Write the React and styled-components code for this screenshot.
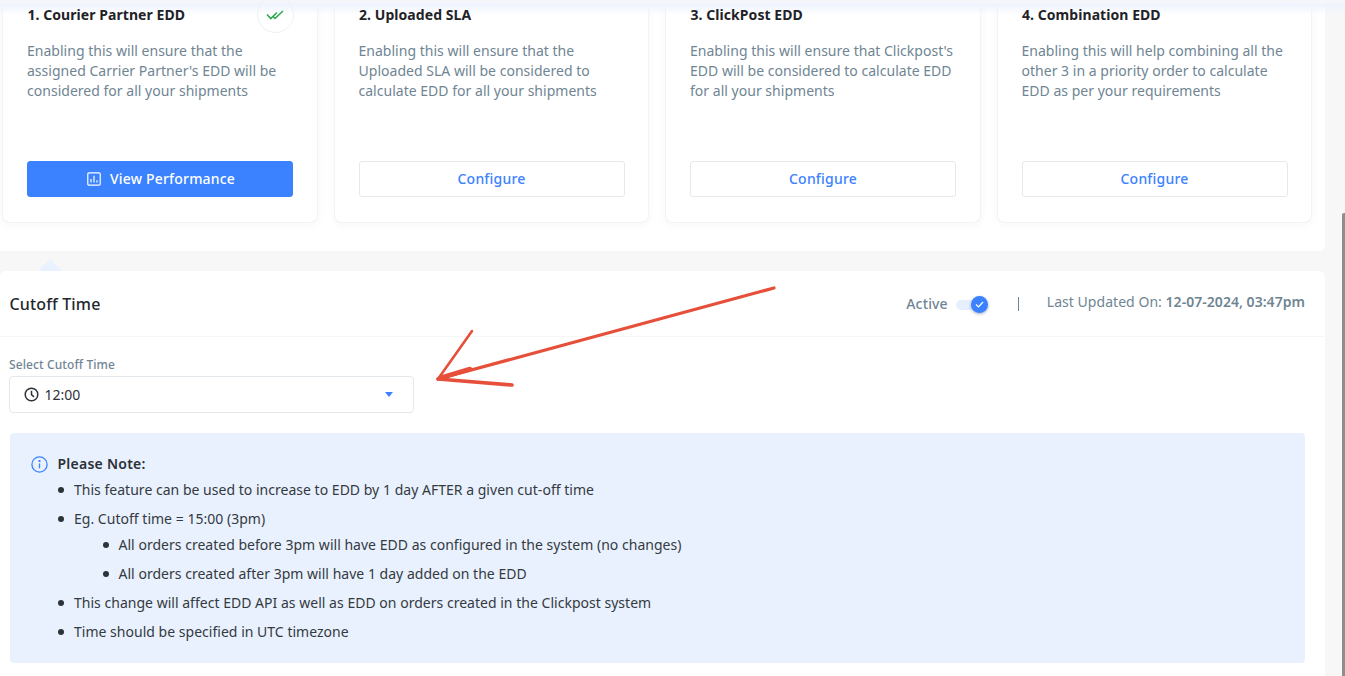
import React from 'react';
import styled, { createGlobalStyle } from 'styled-components';

const Global = createGlobalStyle`
  html, body { margin: 0; padding: 0; overflow: hidden; background: #f7f7f7; }
  * { box-sizing: border-box; }
  body { font-family: "Noto Sans", "Open Sans", sans-serif; }
`;

const Page = styled.div`
  position: relative;
  width: 1345px;
  height: 676px;
  overflow: hidden;
  background: #f7f7f7;
`;
const TopShade = styled.div`
  position: absolute;
  left: 0; right: 0; top: 0;
  height: 15px;
  background: linear-gradient(180deg, #f4f6f9 0, #f4f6f9 3px, #eef3fe 4px, rgba(240,245,255,0) 15px);
  z-index: 1;
`;
const Content = styled.div`
  width: 1325px;
  display: flex;
  flex-direction: column;
  gap: 20px;
`;
const CardsPanel = styled.section`
  height: 251px;
  background: #fff;
  border-radius: 0 0 6px 0;
  padding-left: 2px;
  display: grid;
  grid-template-columns: repeat(4, 315.5px);
  column-gap: 16px;
  align-items: start;
`;
const Card = styled.article`
  position: relative;
  height: 223px;
  background: #fff;
  border: 1px solid #f2f3f5;
  border-top: 0;
  border-radius: 0 0 8px 8px;
  box-shadow: 0 2px 8px rgba(40, 60, 90, 0.04);
  padding: 5px 24px 0;
  display: flex;
  flex-direction: column;
`;
const CardTitle = styled.h3`
  position: relative;
  z-index: 2;
  margin: 0 0 0 0.5px;
  font-size: 14px;
  line-height: 19px;
  font-weight: 700;
  letter-spacing: 0.06px;
  color: #1f2328;
`;
const CardText = styled.p`
  margin: 17px 0 0;
  width: 266px;
  font-size: 14px;
  line-height: 20px;
  letter-spacing: 0.02px;
  color: #6f8593;
`;
const Badge = styled.div`
  position: absolute;
  z-index: 2;
  right: 23px;
  top: -4px;
  width: 37px;
  height: 37px;
  border-radius: 50%;
  background: transparent;
  border: 1px solid #eef0f2;
  display: flex;
  align-items: center;
  justify-content: center;
`;
const ActionButton = styled.button`
  position: absolute;
  left: 24px;
  top: 161px;
  width: 266px;
  height: 36px;
  border-radius: 3px;
  border: 1px solid ${p => (p.$primary ? '#3a82ff' : '#e6e9ec')};
  background: ${p => (p.$primary ? '#3a82ff' : '#fff')};
  color: ${p => (p.$primary ? '#fff' : '#3a82ff')};
  font: 500 14px/20px "Noto Sans", sans-serif;
  letter-spacing: 0.2px;
  display: flex;
  align-items: center;
  justify-content: center;
  gap: 9px;
  padding: 0 1px 0 ${p => (p.$primary ? '3px' : '1px')};
`;
const CutoffPanel = styled.section`
  position: relative;
  height: 420px;
  background: #fff;
  border-radius: 6px 6px 0 0;
`;
const Peak = styled.div`
  position: absolute;
  left: 38px;
  top: -12px;
  width: 0;
  height: 0;
  border-left: 12px solid transparent;
  border-right: 12px solid transparent;
  border-bottom: 12px solid #eaf2ff;
`;
const PanelHeader = styled.header`
  height: 66px;
  border-bottom: 1px solid #f6f6f7;
  padding: 0 20px 0 9.5px;
  display: flex;
  align-items: center;
  justify-content: space-between;
`;
const PanelTitle = styled.h2`
  margin: 0;
  font-size: 16px;
  font-weight: 500;
  line-height: 22px;
  letter-spacing: 0.15px;
  color: #24282d;
`;
const Status = styled.div`
  display: flex;
  align-items: center;
  font-size: 14px;
  line-height: 20px;
  color: #6f8593;
`;
const ActiveLabel = styled.span`
  margin-top: 0;
  font-weight: 500;
  letter-spacing: 0.15px;
`;
const SwitchTrack = styled.div`
  position: relative;
  width: 32px;
  height: 10px;
  margin: 2px 0 0 8px;
  border-radius: 5px;
  background: #e6effe;
`;
const SwitchKnob = styled.div`
  position: absolute;
  right: 0;
  top: -4px;
  width: 17px;
  height: 17px;
  border-radius: 50%;
  background: #3a82ff;
  box-shadow: 0 1px 3px rgba(30, 60, 120, 0.45);
  display: flex;
  align-items: center;
  justify-content: center;
`;
const Divider = styled.span`
  width: 1px;
  height: 14px;
  margin: 0 28px 0 30px;
  background: #6f8593;
`;
const Updated = styled.span`
  margin-top: -4px;
  letter-spacing: 0.04px;
  b { font-weight: 600; }
`;
const PanelBody = styled.div`
  padding: 20px 20px 0 9px;
`;
const FieldLabel = styled.label`
  display: block;
  font-size: 12px;
  line-height: 16px;
  font-weight: 500;
  letter-spacing: 0.1px;
  color: #6f8593;
`;
const Select = styled.div`
  margin-top: 3px;
  width: 405px;
  height: 37px;
  border: 1px solid #e3e8ed;
  border-radius: 4px;
  padding: 0 20px 0 13.5px;
  display: flex;
  align-items: center;
  gap: 6px;
  font-size: 14px;
  color: #2c3238;
`;
const Caret = styled.span`
  margin-left: auto;
  width: 0;
  height: 0;
  border-left: 4.5px solid transparent;
  border-right: 4.5px solid transparent;
  border-top: 5px solid #3a82ff;
`;
const Note = styled.div`
  margin: 20px 0 0 1px;
  width: 1295px;
  height: 230px;
  border-radius: 4px;
  background: #e9f1ff;
  padding: 21px 21px 0 20.5px;
  font-size: 14px;
  line-height: 20px;
  letter-spacing: 0.02px;
  color: #343a40;
`;
const NoteHead = styled.div`
  display: flex;
  align-items: center;
  gap: 10px;
  font-weight: 600;
  letter-spacing: 0.25px;
  color: #2b3036;
`;
const NoteList = styled.ul`
  margin: ${p => (p.$nested ? '0' : '1px 0 0')};
  padding: 0 0 0 ${p => (p.$nested ? '44.5px' : '43.5px')};
  list-style: none;
`;
const NoteItem = styled.li`
  position: relative;
  margin-top: ${p => (p.$tight ? '6px' : '9px')};
  &::before {
    content: '';
    position: absolute;
    left: -16px;
    top: 7px;
    width: 6px;
    height: 6px;
    border-radius: 50%;
    background: #2c3238;
  }
`;
const Thumb = styled.div`
  position: absolute;
  right: 0;
  top: 213px;
  width: 3px;
  bottom: 0;
  background: #8e8e8e;
  border-radius: 2px 0 0 0;
`;
const ArrowOverlay = styled.svg`
  position: absolute;
  left: 0;
  top: 0;
  z-index: 4;
  pointer-events: none;
`;

const cards = [
  { title: '1. Courier Partner EDD', text: "Enabling this will ensure that the assigned Carrier Partner's EDD will be considered for all your shipments", primary: true },
  { title: '2. Uploaded SLA', text: 'Enabling this will ensure that the Uploaded SLA will be considered to calculate EDD for all your shipments' },
  { title: '3. ClickPost EDD', text: "Enabling this will ensure that Clickpost's EDD will be considered to calculate EDD for all your shipments" },
  { title: '4. Combination EDD', text: 'Enabling this will help combining all the other 3 in a priority order to calculate EDD as per your requirements' },
];

const DoubleCheck = () => (
  <svg width="18" height="10" viewBox="0 0 18 10" fill="none" stroke="#2fa84f" strokeWidth="1.6">
    <path d="M1 4.5 L4.8 8.5 L11 2.5" />
    <path d="M7 6.5 L9 8.5 L17 1" />
  </svg>
);
const ChartIcon = () => (
  <svg width="14" height="14" viewBox="0 0 14 14" fill="none" stroke="#fff" strokeWidth="1.2">
    <rect x="0.8" y="0.8" width="12.4" height="12.4" rx="1.2" />
    <path d="M4 10.5 V7 M7 10.5 V3.8 M10 10.5 V8.2" />
  </svg>
);
const Clock = () => (
  <svg width="15" height="15" viewBox="0 0 15 15" fill="none" stroke="#2c3238" strokeWidth="1.5">
    <circle cx="7.5" cy="7.5" r="6.3" />
    <path d="M7.5 3.8 V7.6 L10 10" />
  </svg>
);
const Info = () => (
  <svg width="17" height="17" viewBox="0 0 17 17" fill="none" stroke="#3a82ff" strokeWidth="1.3">
    <circle cx="8.5" cy="8.5" r="7.6" />
    <path d="M8.5 7.5 V12.3" />
    <circle cx="8.5" cy="5.1" r="0.5" fill="#3a82ff" />
  </svg>
);

export default function App() {
  return (
    <Page>
      <Global />
      <TopShade />
      <Content>
        <CardsPanel>
          {cards.map(c => (
            <Card key={c.title}>
              <CardTitle>{c.title}</CardTitle>
              <CardText>{c.text}</CardText>
              {c.primary && (
                <Badge>
                  <DoubleCheck />
                </Badge>
              )}
              <ActionButton $primary={c.primary}>
                {c.primary && <ChartIcon />}
                {c.primary ? 'View Performance' : 'Configure'}
              </ActionButton>
            </Card>
          ))}
        </CardsPanel>
        <CutoffPanel>
          <Peak />
          <PanelHeader>
            <PanelTitle>Cutoff Time</PanelTitle>
            <Status>
              <ActiveLabel>Active</ActiveLabel>
              <SwitchTrack>
                <SwitchKnob>
                  <svg width="9" height="7" viewBox="0 0 9 7" fill="none" stroke="#fff" strokeWidth="1.2">
                    <path d="M1 3.5 L3.5 6 L8 1" />
                  </svg>
                </SwitchKnob>
              </SwitchTrack>
              <Divider />
              <Updated>
                Last Updated On: <b>12-07-2024, 03:47pm</b>
              </Updated>
            </Status>
          </PanelHeader>
          <PanelBody>
            <FieldLabel>Select Cutoff Time</FieldLabel>
            <Select>
              <Clock />
              12:00
              <Caret />
            </Select>
            <Note>
              <NoteHead>
                <Info />
                Please Note:
              </NoteHead>
              <NoteList>
                <NoteItem $tight>This feature can be used to increase to EDD by 1 day AFTER a given cut-off time</NoteItem>
                <NoteItem>
                  Eg. Cutoff time = 15:00 (3pm)
                  <NoteList $nested>
                    <NoteItem $tight>All orders created before 3pm will have EDD as configured in the system (no changes)</NoteItem>
                    <NoteItem>All orders created after 3pm will have 1 day added on the EDD</NoteItem>
                  </NoteList>
                </NoteItem>
                <NoteItem>This change will affect EDD API as well as EDD on orders created in the Clickpost system</NoteItem>
                <NoteItem>Time should be specified in UTC timezone</NoteItem>
              </NoteList>
            </Note>
          </PanelBody>
        </CutoffPanel>
      </Content>
      <Thumb />
      <ArrowOverlay width="1345" height="676" viewBox="0 0 1345 676" fill="none" stroke="#e6503a" strokeLinecap="round" strokeLinejoin="round">
        <path d="M774 288 L438 379" strokeWidth="3.2" />
        <path d="M472 331 L438 379" strokeWidth="2.6" />
        <path d="M438 379 L512 385" strokeWidth="3.6" />
        <path d="M440 378 L470 369" strokeWidth="4.5" />
      </ArrowOverlay>
    </Page>
  );
}
